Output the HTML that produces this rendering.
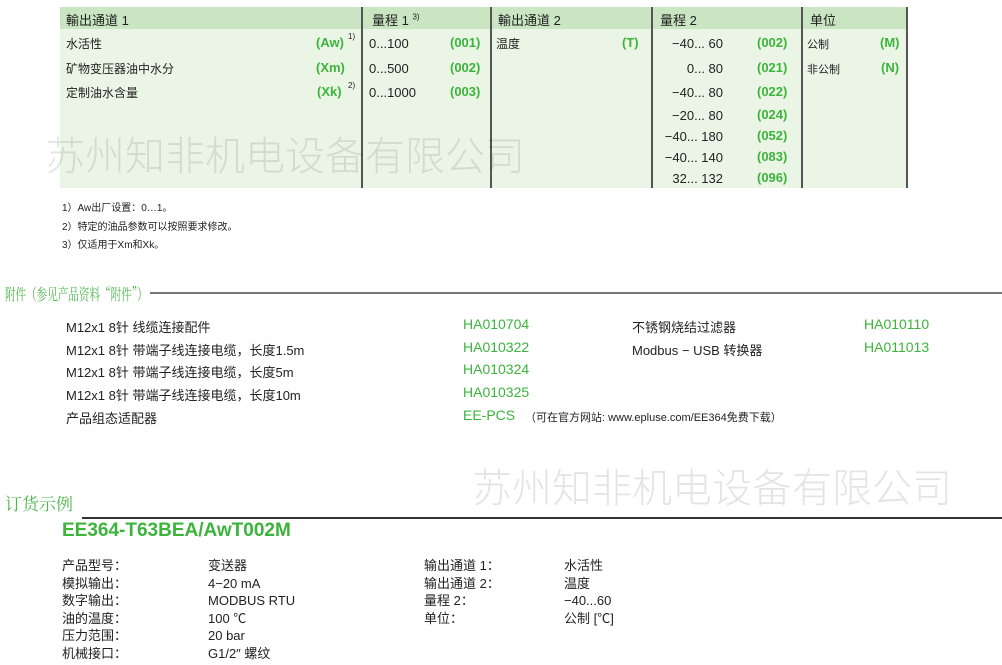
<!DOCTYPE html>
<html><head><meta charset="utf-8"><style>
body{margin:0;width:1002px;height:665px;background:#fff;position:relative;overflow:hidden;font-family:"Liberation Sans","Noto Sans CJK SC",sans-serif;color:#222}
.a{position:absolute;white-space:nowrap}
.c{font-size:12px;font-family:"Liberation Sans","Noto Sans CJK SC",sans-serif}
.g{color:#3cb43c;font-weight:bold;font-size:13px}
.gn{color:#3cb43c;font-size:14px}
.s{font-size:13px}
.v{position:absolute;top:7px;height:181px;width:2px;background:#555}
.wm{position:absolute;font-family:"Noto Sans CJK SC",sans-serif;font-size:40px;color:#000;opacity:.1;white-space:nowrap;font-weight:300}
sup{font-size:8px}
</style></head><body>
<div class="a" style="left:60px;top:7px;width:848px;height:22px;background:#c9e5c1"></div>
<div class="a" style="left:60px;top:29px;width:848px;height:159px;background:#ebf5e6"></div>
<div class="v" style="left:361px"></div><div class="v" style="left:490px"></div><div class="v" style="left:651px"></div><div class="v" style="left:801px"></div><div class="v" style="left:906px"></div>
<div class="a c" style="left:66px;top:10px;font-size:13px">輸出通道 1</div>
<div class="a c" style="left:372px;top:10px;font-size:13px">量程 1 <sup>3)</sup></div>
<div class="a c" style="left:498px;top:10px;font-size:13px">輸出通道 2</div>
<div class="a c" style="left:660px;top:10px;font-size:13px">量程 2</div>
<div class="a c" style="left:810px;top:10px;font-size:13px">单位</div>

<div class="a c" style="left:66px;top:35px">水活性</div><div class="a g" style="left:316px;top:35px">(Aw)</div><div class="a" style="left:348px;top:32px;font-size:8px">1)</div>
<div class="a c" style="left:66px;top:60px">矿物变压器油中水分</div><div class="a g" style="left:316px;top:60px">(Xm)</div>
<div class="a c" style="left:66px;top:84px">定制油水含量</div><div class="a g" style="left:317px;top:84px">(Xk)</div><div class="a" style="left:348px;top:81px;font-size:8px">2)</div>
<div class="a s" style="left:369px;top:36px">0...100</div><div class="a g" style="left:450px;top:35px">(001)</div>
<div class="a s" style="left:369px;top:61px">0...500</div><div class="a g" style="left:450px;top:60px">(002)</div>
<div class="a s" style="left:369px;top:85px">0...1000</div><div class="a g" style="left:450px;top:84px">(003)</div>
<div class="a c" style="left:496px;top:35px">温度</div><div class="a g" style="left:622px;top:35px">(T)</div>
<div class="a s" style="right:279px;top:36px">−40... 60</div><div class="a g" style="left:757px;top:35px">(002)</div>
<div class="a s" style="right:279px;top:61px">0... 80</div><div class="a g" style="left:757px;top:60px">(021)</div>
<div class="a s" style="right:279px;top:85px">−40... 80</div><div class="a g" style="left:757px;top:84px">(022)</div>
<div class="a s" style="right:279px;top:108px">−20... 80</div><div class="a g" style="left:757px;top:107px">(024)</div>
<div class="a s" style="right:279px;top:129px">−40... 180</div><div class="a g" style="left:757px;top:128px">(052)</div>
<div class="a s" style="right:279px;top:150px">−40... 140</div><div class="a g" style="left:757px;top:149px">(083)</div>
<div class="a s" style="right:279px;top:171px">32... 132</div><div class="a g" style="left:757px;top:170px">(096)</div>
<div class="a c" style="left:807px;top:36px;font-size:11px">公制</div><div class="a g" style="left:880px;top:35px">(M)</div>
<div class="a c" style="left:807px;top:61px;font-size:11px">非公制</div><div class="a g" style="left:881px;top:60px">(N)</div>

<div class="wm" style="left:45px;top:124px">苏州知非机电设备有限公司</div>

<div class="a" style="left:62px;top:199px;font-size:10px">1）Aw出厂设置：0…1。</div>
<div class="a" style="left:62px;top:218px;font-size:10px">2）特定的油品参数可以按照要求修改。</div>
<div class="a" style="left:62px;top:236px;font-size:10px">3）仅适用于Xm和Xk。</div>

<div class="a" style="left:5px;top:282px;color:#4cb84c;font-size:16px;font-family:'Noto Serif CJK SC',serif;transform:scaleX(0.66);transform-origin:0 0">附件（参见产品资料“附件”）</div>
<div class="a" style="left:150px;top:292px;width:852px;height:2px;background:#777"></div>

<div class="a s" style="left:66px;top:317px">M12x1 8针 线缆连接配件</div><div class="a gn" style="left:463px;top:316px">HA010704</div>
<div class="a s" style="left:66px;top:340px">M12x1 8针 带端子线连接电缆，长度1.5m</div><div class="a gn" style="left:463px;top:339px">HA010322</div>
<div class="a s" style="left:66px;top:362px">M12x1 8针 带端子线连接电缆，长度5m</div><div class="a gn" style="left:463px;top:361px">HA010324</div>
<div class="a s" style="left:66px;top:385px">M12x1 8针 带端子线连接电缆，长度10m</div><div class="a gn" style="left:463px;top:384px">HA010325</div>
<div class="a s" style="left:66px;top:408px">产品组态适配器</div><div class="a gn" style="left:463px;top:407px">EE-PCS</div>
<div class="a" style="left:525px;top:409px;font-size:11px">（可在官方网站: www.epluse.com/EE364免费下载）</div>
<div class="a s" style="left:632px;top:317px">不锈钢烧结过滤器</div><div class="a gn" style="left:864px;top:316px">HA010110</div>
<div class="a s" style="left:632px;top:340px">Modbus − USB 转换器</div><div class="a gn" style="left:864px;top:339px">HA011013</div>

<div class="wm" style="left:472px;top:456px">苏州知非机电设备有限公司</div>

<div class="a" style="left:5px;top:490px;color:#4cb84c;font-size:17px;font-family:'Noto Serif CJK SC',serif">订货示例</div>
<div class="a" style="left:82px;top:517px;width:920px;height:2px;background:#333"></div>
<div class="a" style="left:62px;top:520px;color:#3cb43c;font-weight:bold;font-size:19px">EE364-T63BEA/AwT002M</div>

<div class="a s" style="left:62px;top:557px;line-height:17.6px">产品型号：<br>模拟输出：<br>数字输出：<br>油的温度：<br>压力范围：<br>机械接口：</div>
<div class="a s" style="left:208px;top:557px;line-height:17.6px">变送器<br>4−20 mA<br>MODBUS RTU<br>100 ℃<br>20 bar<br>G1/2″ 螺纹</div>
<div class="a s" style="left:424px;top:557px;line-height:17.6px">输出通道 1：<br>输出通道 2：<br>量程 2：<br>单位：</div>
<div class="a s" style="left:564px;top:557px;line-height:17.6px">水活性<br>温度<br>−40...60<br>公制 [℃]</div>
</body></html>
